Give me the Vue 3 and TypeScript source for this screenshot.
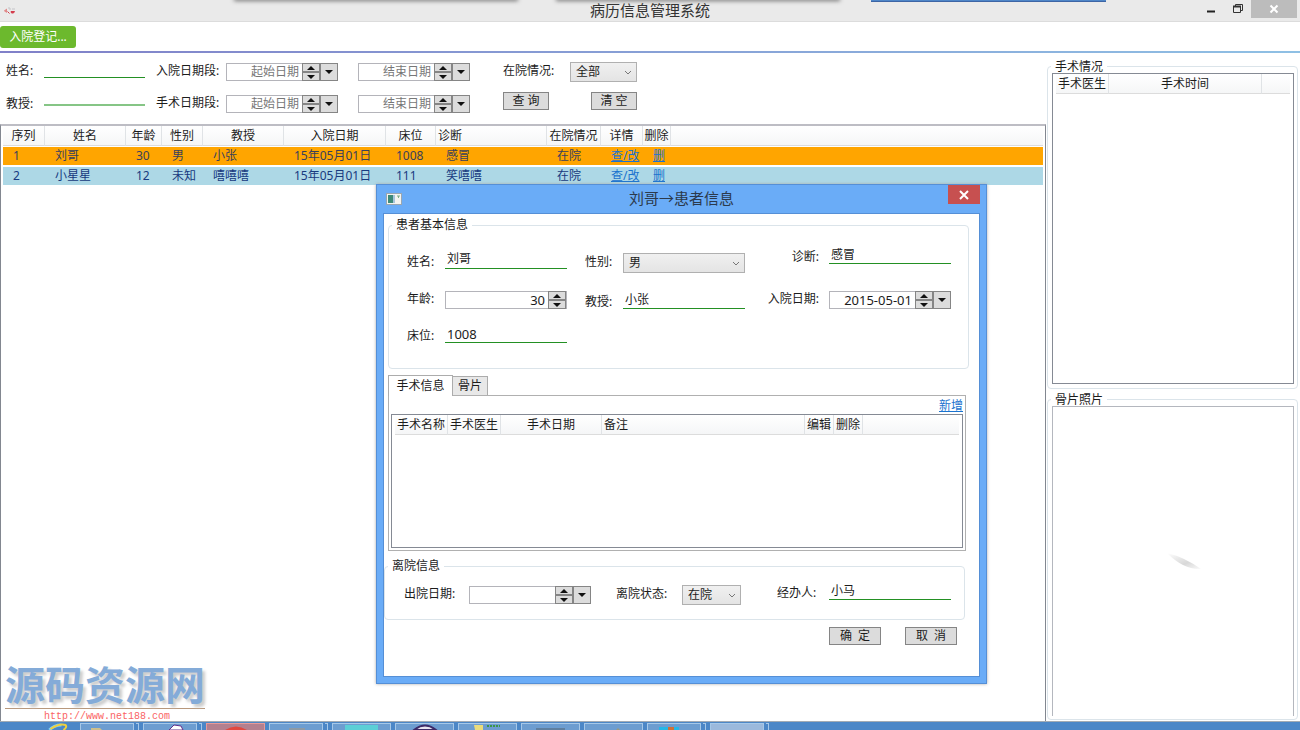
<script setup lang="ts">
import { reactive, ref } from 'vue'

interface Patient {
  no: number
  name: string
  age: number
  sex: string
  professor: string
  admitted: string
  bed: string
  diagnosis: string
  status: string
}

type Kind = 'line' | 'select' | 'spin' | 'date'

interface Field {
  id: string
  label: string
  kind: Kind
  value: string
  numeric?: boolean
}

const patients: Patient[] = [
  { no: 1, name: '刘哥', age: 30, sex: '男', professor: '小张', admitted: '15年05月01日', bed: '1008', diagnosis: '感冒', status: '在院' },
  { no: 2, name: '小星星', age: 12, sex: '未知', professor: '嘻嘻嘻', admitted: '15年05月01日', bed: '111', diagnosis: '笑嘻嘻', status: '在院' },
]

const patientHeads = ['序列', '姓名', '年龄', '性别', '教授', '入院日期', '床位', '诊断', '在院情况', '详情', '删除']
const surgeryHeads = ['手术名称', '手术医生', '手术日期', '备注', '编辑', '删除']

const ranges = [
  { id: 'admit', label: '入院日期段:' },
  { id: 'surgery', label: '手术日期段:' },
]
const ends = ['起始日期', '结束日期']

const basic = reactive<Field[]>([
  { id: 'name', label: '姓名:', kind: 'line', value: '刘哥' },
  { id: 'sex', label: '性别:', kind: 'select', value: '男' },
  { id: 'diagnosis', label: '诊断:', kind: 'line', value: '感冒' },
  { id: 'age', label: '年龄:', kind: 'spin', value: '30', numeric: true },
  { id: 'professor', label: '教授:', kind: 'line', value: '小张' },
  { id: 'admitted', label: '入院日期:', kind: 'date', value: '2015-05-01', numeric: true },
  { id: 'bed', label: '床位:', kind: 'line', value: '1008', numeric: true },
])

const leave = reactive<Field[]>([
  { id: 'leaving', label: '出院日期:', kind: 'date', value: '', numeric: true },
  { id: 'state', label: '离院状态:', kind: 'select', value: '在院' },
  { id: 'agent', label: '经办人:', kind: 'line', value: '小马' },
])

const groups = [
  { key: 'basic', title: '患者基本信息', fields: basic },
  { key: 'leave', title: '离院信息', fields: leave },
]

const confirmLabels = { ok: '确  定', cancel: '取  消' }
const filterStatus = ref('全部')
const tasks = ['folder', 'violet', 'red', 'grey', 'teal', 'ring', 'notes', 'bar', 'dot', 'cyan', 'active']
const stacked = ['folder', 'violet', 'grey', 'cyan', 'active']
</script>

<template>
  <div class="screen">
    <header class="titlebar">
      <svg class="app-icon" width="14" height="12" viewBox="0 0 14 12" aria-hidden="true">
        <path d="M1 5.500L4 3.500V8L1.500 6.500Z" fill="#e08a8a" />
        <path d="M4.500 6.500L6.500 8.500M8 6.500h3.500l-1 1.500h-2z" stroke="#d43c4c" fill="#d43c4c" />
        <path d="M5 3h2v2M9 4h3" stroke="#c4c4c8" fill="none" />
      </svg>
      <span class="shade shade-a"></span>
      <span class="shade shade-b"></span>
      <span class="strip"></span>
      <h1>病历信息管理系统</h1>
      <div class="caption">
        <button type="button" aria-label="最小化">
          <svg width="10" height="18" viewBox="0 0 10 18"><path d="M1 11.500h8" stroke="#222" stroke-width="2" /></svg>
        </button>
        <button type="button" aria-label="还原">
          <svg width="12" height="18" viewBox="0 0 12 18">
            <path d="M1.500 6.500h7v6h-7zM3.500 6V4.500h7v6H9" fill="none" stroke="#333" />
            <path d="M1 6.500h8" stroke="#333" stroke-width="2" />
          </svg>
        </button>
        <button type="button" class="close" aria-label="关闭">
          <svg width="10" height="10" viewBox="0 0 10 10"><path d="M1.500 1.500l7 7M8.500 1.500l-7 7" stroke="#fff" stroke-width="2" /></svg>
        </button>
      </div>
    </header>

    <nav class="toolbar">
      <button type="button" class="register">入院登记...</button>
    </nav>

    <main class="body">
      <section class="main-col">
        <form class="filters" @submit.prevent>
          <div class="fcol who">
            <div class="field line">
              <label for="f-name">姓名:</label>
              <input id="f-name" class="underline" type="text" />
            </div>
            <div class="field line low">
              <label for="f-prof">教授:</label>
              <input id="f-prof" class="underline pale" type="text" />
            </div>
          </div>
          <div class="fcol">
            <div v-for="r in ranges" :key="r.id" class="field boxed range">
              <label :for="`f-${r.id}-0`">{{ r.label }}</label>
              <div v-for="(e, i) in ends" :key="e" class="datebox">
                <input :id="`f-${r.id}-${i}`" type="text" :placeholder="e" :aria-label="e" />
                <span class="spin">
                  <button type="button" aria-label="增加"><svg width="10" height="6" viewBox="0 0 10 6"><path d="M1 5L5 1l4 4z" /></svg></button>
                  <button type="button" aria-label="减少"><svg width="10" height="6" viewBox="0 0 10 6"><path d="M1 1l4 4 4-4z" /></svg></button>
                </span>
                <button type="button" class="drop" aria-label="选择日期"><svg width="8" height="4" viewBox="0 0 8 4"><path d="M0 0h8L4 4z" /></svg></button>
              </div>
            </div>
          </div>
          <div class="fcol status">
            <div class="field boxed">
              <label for="f-status">在院情况:</label>
              <span class="selectbox">
                <select id="f-status" v-model="filterStatus"><option>全部</option></select>
                <svg width="8" height="6" viewBox="0 0 8 6" aria-hidden="true"><path d="M1 1l3 3 3-3" /></svg>
              </span>
            </div>
            <div class="actions">
              <button type="submit" class="btn">查 询</button>
              <button type="reset" class="btn">清 空</button>
            </div>
          </div>
        </form>

        <div class="list">
          <table class="patients">
            <colgroup>
              <col v-for="n in 11" :key="n" :class="`p${n}`" />
              <col />
            </colgroup>
            <thead>
              <tr>
                <th v-for="h in patientHeads" :key="h" :class="{ start: h === '诊断' }">{{ h }}</th>
                <th></th>
              </tr>
            </thead>
            <tbody>
              <tr v-for="p in patients" :key="p.no" :class="{ selected: p.no === 1 }">
                <td>{{ p.no }}</td>
                <td>{{ p.name }}</td>
                <td>{{ p.age }}</td>
                <td>{{ p.sex }}</td>
                <td>{{ p.professor }}</td>
                <td>{{ p.admitted }}</td>
                <td>{{ p.bed }}</td>
                <td>{{ p.diagnosis }}</td>
                <td>{{ p.status }}</td>
                <td><a href="#">查/改</a></td>
                <td><a href="#">删</a></td>
                <td></td>
              </tr>
            </tbody>
          </table>
        </div>
      </section>

      <aside class="right">
        <fieldset class="group surgery">
          <legend>手术情况</legend>
          <div class="pane">
            <table>
              <colgroup><col class="s1" /><col class="wide" /><col /></colgroup>
              <thead><tr><th>手术医生</th><th>手术时间</th><th></th></tr></thead>
            </table>
          </div>
        </fieldset>
        <fieldset class="group photos">
          <legend>骨片照片</legend>
          <div class="pane photo">
            <svg class="smear" width="36" height="20" viewBox="0 0 36 20" aria-hidden="true">
              <defs>
                <linearGradient id="fade" x1="0" y1="0" x2="1" y2="1">
                  <stop offset="0" stop-color="#fff" />
                  <stop offset="0.600" stop-color="#d8d8d8" />
                  <stop offset="1" stop-color="#fafafa" />
                </linearGradient>
              </defs>
              <path d="M1 1Q18 5 35 17Q18 18 1 1Z" fill="url(#fade)" />
            </svg>
          </div>
        </fieldset>
      </aside>
    </main>

    <section class="dialog" role="dialog" aria-labelledby="dlg-title">
      <div class="dlg-bar">
        <svg class="dlg-icon" width="16" height="12" viewBox="0 0 16 12" aria-hidden="true">
          <rect x="0.500" y="0.500" width="15" height="11" fill="#f4f4f0" stroke="#9aa6b0" />
          <rect x="2" y="2" width="5" height="8" fill="#3d8a78" />
          <rect x="7" y="2" width="2" height="8" fill="#a8c4dc" />
          <path d="M11 3h3M12.500 3v2" stroke="#7fae86" />
        </svg>
        <h2 id="dlg-title">刘哥→患者信息</h2>
        <button type="button" class="dlg-close" aria-label="关闭">
          <svg width="10" height="10" viewBox="0 0 10 10"><path d="M1 1l8 8M9 1l-8 8" stroke="#fff" stroke-width="2" /></svg>
        </button>
      </div>
      <form class="client" @submit.prevent>
        <template v-for="g in groups" :key="g.key">
          <fieldset class="group" :class="g.key">
            <legend>{{ g.title }}</legend>
            <div class="fields">
              <div v-for="f in g.fields" :key="f.id" class="field" :class="[f.kind === 'line' ? 'line' : 'boxed', f.id]">
                <label :for="`d-${f.id}`">{{ f.label }}</label>
                <input v-if="f.kind === 'line'" :id="`d-${f.id}`" v-model="f.value" class="underline" :class="{ numeric: f.numeric }" type="text" />
                <span v-else-if="f.kind === 'select'" class="selectbox">
                  <select :id="`d-${f.id}`" v-model="f.value"><option>{{ f.value }}</option></select>
                  <svg width="8" height="6" viewBox="0 0 8 6" aria-hidden="true"><path d="M1 1l3 3 3-3" /></svg>
                </span>
                <div v-else class="datebox">
                  <input :id="`d-${f.id}`" v-model="f.value" class="numeric" type="text" />
                  <span class="spin">
                    <button type="button" aria-label="增加"><svg width="10" height="6" viewBox="0 0 10 6"><path d="M1 5L5 1l4 4z" /></svg></button>
                    <button type="button" aria-label="减少"><svg width="10" height="6" viewBox="0 0 10 6"><path d="M1 1l4 4 4-4z" /></svg></button>
                  </span>
                  <button v-if="f.kind === 'date'" type="button" class="drop" aria-label="选择日期"><svg width="8" height="4" viewBox="0 0 8 4"><path d="M0 0h8L4 4z" /></svg></button>
                </div>
              </div>
            </div>
          </fieldset>

          <div v-if="g.key === 'basic'" class="tabs">
            <div class="tablist" role="tablist">
              <button type="button" role="tab" class="tab on" aria-selected="true">手术信息</button>
              <button type="button" role="tab" class="tab" aria-selected="false">骨片</button>
            </div>
            <div class="tabpanel" role="tabpanel">
              <a href="#" class="add">新增</a>
              <div class="pane">
                <table>
                  <colgroup>
                    <col class="s1" /><col class="s1" /><col class="s3" /><col class="s4" /><col class="s5" /><col class="s5" /><col />
                  </colgroup>
                  <thead>
                    <tr>
                      <th v-for="h in surgeryHeads" :key="h" :class="{ start: h === '备注' }">{{ h }}</th>
                      <th></th>
                    </tr>
                  </thead>
                </table>
              </div>
            </div>
          </div>
        </template>
        <div class="confirm">
          <button type="submit" class="btn">{{ confirmLabels.ok }}</button>
          <button type="button" class="btn">{{ confirmLabels.cancel }}</button>
        </div>
      </form>
    </section>

    <div class="mark">
      <strong>源码资源网</strong>
      <span>http://www.net188.com</span>
    </div>

    <footer class="taskbar">
      <svg class="ie" width="24" height="8" viewBox="0 0 24 8" aria-hidden="true">
        <path d="M2 8Q6 3 14 3" stroke="#7fd0f4" stroke-width="3" fill="none" />
        <path d="M3 7Q12 1 18 3Q20 5 16 8" stroke="#f0cf3c" stroke-width="2" fill="none" />
      </svg>
      <div v-for="t in tasks" :key="t" class="slot">
        <button type="button" class="task" :class="t" :aria-label="t">
          <svg width="40" height="6" viewBox="0 0 40 6" aria-hidden="true">
            <path v-if="t === 'folder'" d="M4 6V4h9l2 2z" fill="#cdbf8c" />
            <path v-else-if="t === 'violet'" d="M19 6l5-5 7 1 2 4z" fill="#fff" stroke="#63308c" />
            <path v-else-if="t === 'red'" d="M9 6Q20 -1 31 6z" fill="#e2483f" />
            <path v-else-if="t === 'grey'" d="M13 6V4h16v2z" fill="#8d9aa5" />
            <path v-else-if="t === 'teal'" d="M3 1h33v5H3z" fill="#5bcfd6" />
            <path v-else-if="t === 'ring'" d="M9 6Q20 -3 31 6z" fill="#e8e4f0" stroke="#3c2a68" stroke-width="2" />
            <g v-else-if="t === 'notes'">
              <path d="M6 1h9v5H7z" fill="#eadc7c" />
              <path d="M19 2h13" stroke="#3c9648" stroke-width="2" stroke-dasharray="2 1" />
            </g>
            <path v-else-if="t === 'bar'" d="M5 4h29v2H5z" fill="#5f7f9f" />
            <path v-else-if="t === 'dot'" d="M22 6l2-2 2 2z" fill="#9a9a80" />
            <g v-else-if="t === 'cyan'">
              <path d="M5 3h20v3H5z" fill="#25b7e6" />
              <path d="M14 3h6v3h-6z" fill="#cf7038" />
            </g>
          </svg>
        </button>
        <i v-if="stacked.includes(t)"></i>
      </div>
    </footer>
  </div>
</template>

<style>
body {
  margin: 0;
  background: #fff;
}
</style>

<style scoped>
.screen {
  position: relative;
  display: flex;
  flex-direction: column;
  min-height: 100vh;
  overflow: hidden;
  font: 12px/18px "Noto Sans", "Noto Sans CJK SC", sans-serif;
  color: #1c1c1c;
}
.screen * {
  box-sizing: border-box;
}
button,
input,
select {
  margin: 0;
  padding: 0;
  border: 0;
  border-radius: 0;
  outline: 0;
  background: none;
  font: inherit;
  color: inherit;
}
h1,
h2 {
  margin: 0;
  font-size: 15px;
  font-weight: 400;
  color: #333;
}
a {
  color: #1a73cf;
  text-decoration: underline;
}

.titlebar {
  position: relative;
  display: flex;
  justify-content: center;
  height: 22px;
  background: #eaeaea;
  border-bottom: 1px solid #dcdcdc;
}
.titlebar h1 {
  line-height: 20px;
}
.app-icon {
  position: absolute;
  left: 3px;
  top: 5px;
}
.shade {
  position: absolute;
  top: -4px;
  width: 284px;
  height: 4px;
  box-shadow: 0 1px 4px #777;
}
.shade-a {
  left: 234px;
}
.shade-b {
  left: 556px;
}
.strip {
  position: absolute;
  top: 0;
  left: 871px;
  width: 235px;
  height: 2px;
  background: #4f86c8;
  border-bottom: 1px solid #3d65a5;
}
.caption {
  position: absolute;
  top: 0;
  right: 3px;
  display: flex;
  height: 18px;
}
.caption button {
  display: flex;
  align-items: center;
  justify-content: center;
  width: 27px;
}
.caption .close {
  width: 46px;
  background: #bcbcbc;
}

.toolbar {
  display: flex;
  align-items: center;
  height: 31px;
  border-bottom: 2px solid;
  border-image: linear-gradient(90deg, #8080c8, #8fc0e4) 1;
}
.register {
  width: 76px;
  height: 22px;
  border-radius: 3px;
  background: #6cb92d;
  color: #fff;
}

.body {
  flex: 1;
  display: flex;
}
.main-col {
  flex: 1;
  display: flex;
  flex-direction: column;
  min-width: 0;
}
.right {
  display: flex;
  flex-direction: column;
  gap: 4px;
  width: 254px;
  padding: 7px 2px 1px 1px;
}

.field {
  display: flex;
  align-items: center;
}
.field label {
  flex: none;
  min-width: 38px;
  line-height: 15px;
  white-space: nowrap;
}
.boxed label {
  padding-bottom: 3px;
}
.line label {
  padding-top: 3px;
}
.underline {
  width: 122px;
  height: 18px;
  padding: 0 2px;
  border-bottom: 1px solid #239023;
}
.underline.pale {
  border-bottom: 2px solid #86c586;
}
.numeric {
  font-size: 13px;
}
.datebox {
  display: flex;
  width: 122px;
  height: 18px;
  border: 1px solid #b4b4ba;
  background: #fff;
}
.datebox input {
  flex: 1;
  min-width: 0;
  padding-right: 3px;
  text-align: right;
}
.datebox input::placeholder {
  color: #777;
  opacity: 1;
}
.spin {
  display: grid;
  grid-template-rows: 1fr 1fr;
  width: 18px;
  margin: -1px 0;
}
.spin button,
.drop {
  display: flex;
  align-items: center;
  justify-content: center;
  border: 1px solid #858585;
  background: #dcdcdc;
}
.drop {
  width: 18px;
  margin: -1px -1px -1px 0;
}
.spin svg,
.drop svg {
  flex: none;
  fill: #111;
}
.btn {
  height: 18px;
  border: 1px solid #858585;
  background: #dcdcdc;
  line-height: 16px;
  white-space: pre;
}
.selectbox {
  position: relative;
  display: flex;
  width: 122px;
  height: 20px;
}
.selectbox select {
  width: 100%;
  padding: 0 5px;
  appearance: none;
  border: 1px solid #b0b0b0;
  background: linear-gradient(#f0f0f0, #e4e4e4);
}
.selectbox svg {
  position: absolute;
  right: 5px;
  top: 8px;
  fill: none;
  stroke: #777;
  pointer-events: none;
}

.filters {
  display: flex;
  height: 71px;
  padding-left: 6px;
}
.fcol {
  display: flex;
  flex-direction: column;
  gap: 14px;
  padding-top: 10px;
}
.who {
  gap: 15px;
  width: 150px;
  padding-top: 7px;
}
.who .underline {
  width: 101px;
}
.low {
  align-items: flex-start;
}
.low .underline {
  height: 13px;
}
.range label {
  width: 70px;
}
.range .datebox {
  width: 112px;
  margin-right: 20px;
}
.status {
  gap: 10px;
  padding: 9px 0 0 13px;
}
.status label,
.status .selectbox {
  width: 67px;
}
.actions {
  display: flex;
  justify-content: space-between;
}
.actions .btn {
  width: 46px;
}

.list {
  flex: 1;
  padding: 0 2px;
  border: 1px solid #828790;
  border-top: 2px solid #bdbdc4;
  border-bottom: 0;
}
table {
  width: 100%;
  table-layout: fixed;
  border-spacing: 0;
}
th {
  height: 20px;
  padding: 0;
  border-right: 1px solid #e0e3e6;
  border-bottom: 1px solid #dcdcdc;
  background: linear-gradient(#fff, #f5f6f7);
  font-weight: 400;
  white-space: nowrap;
}
th:last-child {
  border-right: 0;
}
th.start {
  padding-left: 2px;
  text-align: left;
}
td {
  height: 20px;
  padding: 0 0 0 10px;
  border: solid #fff;
  border-width: 1px 0;
  background: #add8e6;
  background-clip: padding-box;
  color: #173a80;
  white-space: nowrap;
}
.selected td {
  background: #ffa500;
  background-clip: padding-box;
  color: #38405c;
}
.p1 { width: 42px; }
.p2 { width: 81px; }
.p3 { width: 36px; }
.p4 { width: 41px; }
.p5 { width: 81px; }
.p6 { width: 102px; }
.p7 { width: 50px; }
.p8 { width: 111px; }
.p9 { width: 54px; }
.p10 { width: 42px; }
.p11 { width: 28px; }
.s1 { width: 53px; }
.s3 { width: 101px; }
.s4 { width: 203px; }
.s5 { width: 29px; }
.wide { width: 153px; }

.group {
  min-width: 0;
  margin: 0;
  padding: 0;
  border: 1px solid #dbe4ea;
  border-radius: 4px;
}
legend {
  margin-left: 3px;
  padding: 0 4px;
  line-height: 14px;
}
.pane {
  flex: 1;
  padding: 0 3px;
  border: 1px solid #858a94;
}
.surgery {
  padding: 0 3px 4px 4px;
}
.surgery .pane {
  height: 311px;
}
.photos {
  flex: 1;
  padding: 0 3px 3px 4px;
}
.surgery legend,
.photos legend {
  margin-left: -1px;
  line-height: 13px;
}
.photo {
  position: relative;
  height: 100%;
  border-color: #b4b7be;
  border-bottom: 0;
}
.smear {
  position: absolute;
  left: 47%;
  top: 47%;
}

.dialog {
  position: absolute;
  left: 376px;
  top: 184px;
  width: 611px;
  padding: 0 6px 6px;
  border: 1px solid #558fd6;
  background: #6aacf7;
  box-shadow: 0 0 3px #aaa;
}
.dlg-bar {
  position: relative;
  height: 28px;
  text-align: center;
}
.dlg-bar h2 {
  line-height: 27px;
  color: #2c3a4c;
}
.dlg-icon {
  position: absolute;
  left: 3px;
  top: 8px;
}
.dlg-close {
  position: absolute;
  right: 0;
  top: 0;
  display: flex;
  align-items: center;
  justify-content: center;
  width: 32px;
  height: 19px;
  background: #c75050;
}
.client {
  height: 464px;
  padding: 4px 10px 0 4px;
  border: 1px solid #558fd6;
  background: #fff;
}
.basic {
  height: 151px;
}
.basic .fields {
  display: grid;
  grid-template-columns: 160px 160px 1fr;
  grid-template-rows: 27px 19px 17px;
  gap: 17px 18px;
  align-items: end;
  padding: 14px 17px 0 18px;
}
.basic .name {
  align-self: center;
}
.basic .diagnosis {
  align-self: start;
}
.diagnosis,
.admitted {
  justify-content: flex-end;
}
.diagnosis label,
.admitted label {
  min-width: 0;
  margin-right: 10px;
}

.tabs {
  margin: 6px 3px 0 0;
}
.tablist {
  display: flex;
  align-items: flex-end;
}
.tab {
  height: 19px;
  width: 35px;
  border: 1px solid #acacac;
  border-bottom: 0;
  border-left: 0;
  background: #e8e8e8;
}
.tab.on {
  z-index: 1;
  width: 65px;
  height: 21px;
  margin-bottom: -1px;
  border-left: 1px solid #acacac;
  background: #fff;
}
.tabpanel {
  display: flex;
  flex-direction: column;
  height: 156px;
  padding: 1px 2px 2px;
  border: 1px solid #b0b0b0;
}
.add {
  align-self: flex-end;
  line-height: 17px;
}

.leave {
  height: 61px;
  margin: 8px 4px 0 -4px;
}
.leave .fields {
  display: flex;
  align-items: center;
  height: 35px;
  padding: 9px 13px 0 19px;
}
.leaving label {
  width: 65px;
}
.state {
  margin-left: 25px;
}
.state label {
  width: 66px;
}
.state .selectbox {
  width: 59px;
}
.agent {
  align-self: flex-start;
  margin-left: auto;
}
.agent label {
  width: 52px;
}
.confirm {
  display: flex;
  justify-content: flex-end;
  gap: 24px;
  padding: 7px 12px 0 0;
}
.confirm .btn {
  width: 52px;
}

.mark {
  position: absolute;
  left: 5px;
  bottom: 6px;
  width: 200px;
}
.mark strong {
  display: block;
  padding-bottom: 4px;
  border-bottom: 1px solid #b8987c;
  font: 700 40px/42px "Noto Sans CJK SC", sans-serif;
  color: #84abd8;
  text-shadow: 3px 3px 3px #ccc;
  white-space: nowrap;
}
.mark span {
  display: block;
  padding-left: 39px;
  font: 10px/15px "Liberation Mono", monospace;
  color: #fa6464;
}

.taskbar {
  display: flex;
  gap: 4px;
  height: 9px;
  padding-left: 43px;
  border-top: 1px solid #a3abb3;
  background: #4c87c7;
}
.ie {
  width: 33px;
}
.slot {
  display: flex;
  gap: 2px;
  width: 59px;
  padding-top: 1px;
}
.slot i {
  width: 3px;
  border: 1px solid #a6c8e8;
  border-width: 1px 1px 0 0;
}
.task {
  flex: 1;
  display: flex;
  justify-content: center;
  align-items: flex-end;
  border: 1px solid #a6c8e8;
  border-bottom: 0;
  background: #6d9dd0;
}
.task.red {
  border-color: #e89a98;
  background: #b3808f;
}
.task.active {
  background: #9bb9dc;
}
</style>
